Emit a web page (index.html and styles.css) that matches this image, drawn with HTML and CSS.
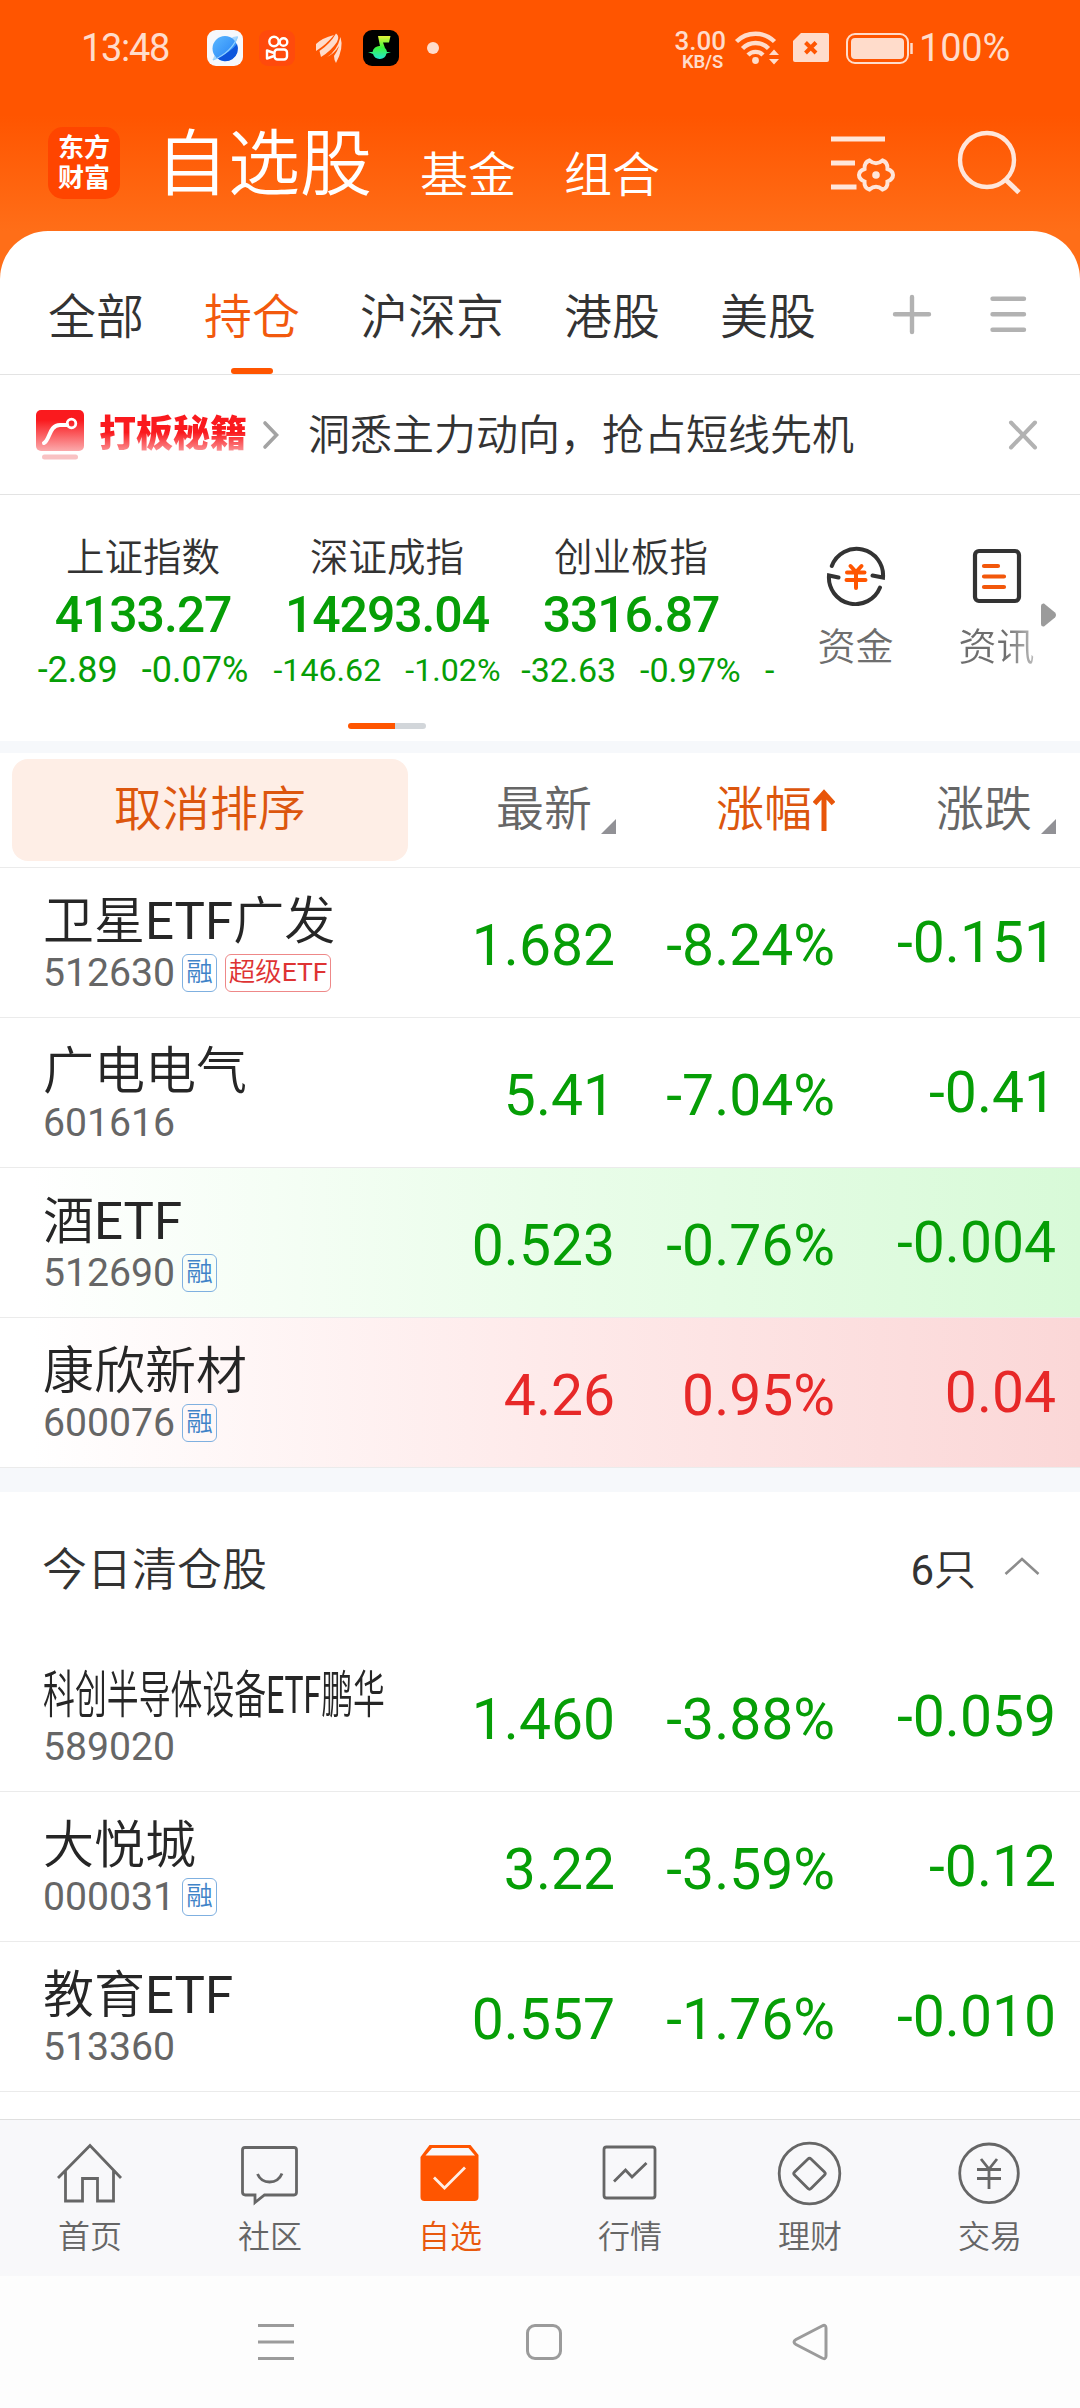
FILE: index.html
```html
<!DOCTYPE html>
<html lang="zh-CN">
<head>
<meta charset="utf-8">
<title>自选股</title>
<link rel="stylesheet" href="styles.css">
</head>
<body>
<div class="app">
  <header class="top">
    <div class="status">
      <span class="clock">13:48</span>
      <svg class="status-apps" width="240" height="40" viewBox="204 28 240 40">
        <defs>
          <linearGradient id="planet" x1="0" y1="0" x2="1" y2="1"><stop offset="0" stop-color="#5cb8ff"/><stop offset="1" stop-color="#1f7df5"/></linearGradient>
          <linearGradient id="note" x1="0" y1="0" x2="0" y2="1"><stop offset="0" stop-color="#e6f53a"/><stop offset=".5" stop-color="#3df53c"/><stop offset="1" stop-color="#22e6d0"/></linearGradient>
        </defs>
        <rect x="207" y="30" width="36" height="36" rx="9" fill="#f6f8fc"/>
        <path d="M212.500 60 L216 52 L233 37 L238 36 L236.500 41 L220 57 Z" fill="#a9d6fb"/>
        <circle cx="225" cy="48.500" r="12.500" fill="url(#planet)"/>
        <path d="M216.500 57.500 Q230 53 237 44 A12.500 12.500 0 0 1 216.500 57.500 Z" fill="#0d55dc"/>
        <path d="M213 60 Q231 53 237.500 37" fill="none" stroke="#8fd0ff" stroke-width="1.200"/>
        <rect x="259" y="30" width="36" height="36" rx="9" fill="#ff4a0c"/>
        <g fill="none" stroke="#fff" stroke-width="2.400" stroke-linejoin="round">
          <circle cx="274" cy="41.500" r="4.700"/><circle cx="283.500" cy="42" r="3.800"/>
          <rect x="274.500" y="49.500" width="12.500" height="10" rx="3"/><path d="M274 53 L267 50.500 V58.500 L274 56"/>
        </g>
        <g fill="#ffdccb"><path d="M316 51 V44 Q322 38 334 35 Q327 44 316 51Z"/><path d="M321 57 L319.500 51 Q330 44 336 33.500 Q340 36 337 42 Q331 51 321 57Z"/><path d="M327 57 Q337 51 340.500 37 Q344 48 336 63 Q334 60 334 56 Q338 50 339 46 Q334 54 327 57Z"/></g>
        <rect x="363" y="30" width="36" height="36" rx="9" fill="#000"/>
        <path d="M378 36 H390.500 L389 42.500 H383 L385 48 A7 7 0 0 1 387 52 H391 L386.500 53.500 A7 7 0 0 1 373 54 L368 52 H372.500 A7 7 0 0 1 380 46 Z" fill="url(#note)"/>
        <circle cx="433" cy="48" r="6" fill="#ffdccb"/>
      </svg>
      <span class="speed"><b>3.00</b><i>KB/S</i></span>
      <svg class="status-net" width="184" height="40" viewBox="734 28 184 40">
        <g fill="none" stroke="#ffdccb" stroke-width="4.400">
          <path d="M737.500 41.500 A27 27 0 0 1 775.500 41.500"/><path d="M743.500 48.500 A18 18 0 0 1 769.500 48.500"/><path d="M749 55 A10.500 10.500 0 0 1 764 55"/>
        </g>
        <circle cx="756.500" cy="60.500" r="3.400" fill="#ffdccb"/>
        <path d="M770 55 L775 49.500 L780 55Z M770 59 L775 64.500 L780 59Z" fill="#ffdccb"/>
        <path d="M802 33 H828 Q830 33 830 35 V60 Q830 62 828 62 H796 Q794 62 794 60 V41 Z" fill="#ffdccb"/>
        <path d="M806.500 42.500 L817 53 M817 42.500 L806.500 53" stroke="#ff5500" stroke-width="4"/>
        <rect x="848" y="34" width="61" height="29" rx="8" fill="none" stroke="#ffdccb" stroke-width="2"/>
        <rect x="852" y="38" width="53" height="21" rx="4" fill="#ffdccb"/>
        <path d="M912.500 43 V54" stroke="#ffdccb" stroke-width="2.500"/>
      </svg>
      <span class="battery">100%</span>
    </div>
    <div class="title-bar">
      <div class="logo"><span>东方</span><span>财富</span></div>
      <h1>自选股</h1>
      <span class="sub-title">基金</span>
      <span class="sub-title">组合</span>
      <svg class="title-tools" width="200" height="70" viewBox="826 128 200 70">
        <path d="M831 139 H885 M831 163 H855 M831 187 H856.500" stroke="#ffe6da" stroke-width="5"/>
        <path d="M869.500 160.500 Q876 166 882.500 160.500 Q888 162.500 887.500 169 Q893 171 893 175 Q893 179 887.500 181.500 Q888 188 882.500 189.500 Q876 184 869.500 189.500 Q864 188 864.500 181.500 Q859 179 859 175 Q859 171 864.500 169 Q864 162.500 869.500 160.500Z" fill="none" stroke="#ffe6da" stroke-width="4"/>
        <circle cx="876" cy="175" r="3.800" fill="#ffe6da"/>
        <circle cx="987" cy="160" r="27" fill="none" stroke="#ffe6da" stroke-width="4.400"/>
        <path d="M1005.500 179.500 L1019 192.500" stroke="#ffe6da" stroke-width="5"/>
      </svg>
    </div>
  </header>

  <main class="panel">
    <nav class="tabs">
      <span>全部</span><span class="on">持仓</span><span>沪深京</span><span>港股</span><span>美股</span>
      <svg class="tab-tools" width="140" height="44" viewBox="890 292 140 44">
        <path d="M895 314.300 H929 M912 297 V332 M992.500 298.700 H1024 M992.500 314.300 H1024 M992.500 329.700 H1024" stroke="#b2b2b2" stroke-width="4.400" stroke-linecap="round"/>
      </svg>
    </nav>

    <div class="promo">
      <svg width="48" height="50" viewBox="0 0 48 50">
        <defs><linearGradient id="red" x1="0" y1="0" x2="0" y2="1"><stop offset=".25" stop-color="#fa1a1e"/><stop offset="1" stop-color="#fbaaac"/></linearGradient></defs>
        <rect width="48" height="41" rx="5" fill="url(#red)"/>
        <path d="M8 33 C14 30 13 15 24 15 H31" fill="none" stroke="#fff" stroke-width="4" stroke-linecap="round"/>
        <circle cx="35.500" cy="13.500" r="4.300" fill="none" stroke="#fff" stroke-width="2.800"/>
        <rect x="6" y="44.500" width="36" height="5" rx="2.500" fill="#f9c2c3"/>
      </svg>
      <strong>打板秘籍</strong>
      <svg class="chev" width="18" height="30" viewBox="0 0 18 30"><path d="M3 3 L14.500 15 L3 27" fill="none" stroke="#a3a3a3" stroke-width="3.600" stroke-linecap="round"/></svg>
      <span class="slogan">洞悉主力动向，抢占短线先机</span>
      <svg class="close" width="32" height="32" viewBox="0 0 32 32"><path d="M4 3.500 L28 28.500 M28 3.500 L4 28.500" stroke="#b2b2b2" stroke-width="4" stroke-linecap="round"/></svg>
    </div>

    <section class="market">
      <div class="indices">
        <div class="index"><span class="iname">上证指数</span><b>4133.27</b><span class="chg c1"><i>-2.89</i><i>-0.07%</i></span></div>
        <div class="index"><span class="iname">深证成指</span><b>14293.04</b><span class="chg c2"><i>-146.62</i><i>-1.02%</i></span></div>
        <div class="index"><span class="iname">创业板指</span><b>3316.87</b><span class="chg c3"><i>-32.63</i><i>-0.97%</i></span></div>
        <div class="index peek"><span class="chg c3"><i>-</i></span></div>
      </div>
      <div class="quick">
        <div class="quick-item">
          <svg width="60" height="60" viewBox="826 546 60 60">
            <path d="M831.800 566 A26.500 26.500 0 0 1 883 577.500 L872.500 575.500" fill="none" stroke="#333" stroke-width="4" stroke-linecap="round"/>
            <path d="M880 587.500 A26.500 26.500 0 0 1 829 575.500 L838.500 577.500" fill="none" stroke="#333" stroke-width="4" stroke-linecap="round"/>
            <path d="M850.500 566 L856 572 L861.500 566 M847 572.500 H864.500 M846.500 580 H865.500 M856 573 V588" fill="none" stroke="#ff5500" stroke-width="4" stroke-linecap="round"/>
          </svg>
          <span>资金</span>
        </div>
        <div class="quick-item">
          <svg width="60" height="60" viewBox="967 546 60 60">
            <rect x="975" y="551" width="44" height="50" rx="4" fill="none" stroke="#333" stroke-width="4.200"/>
            <path d="M984 566 H998 M984 576.500 H1004 M984 587 H1004" stroke="#f2570a" stroke-width="4.200" stroke-linecap="round"/>
          </svg>
          <span class="fade">资讯</span>
        </div>
        <svg class="more" width="15" height="24" viewBox="0 0 15 24"><path d="M0 3 Q0 0 3 .5 L14 9.500 Q16 12 14 14.500 L3 23.500 Q0 24 0 21Z" fill="#9b9b9b"/></svg>
      </div>
    </section>
    <div class="pager"><i></i></div>

    <div class="cols head">
      <span class="cancel">取消排序</span>
      <span class="h1c">最新<svg width="15" height="15"><path d="M15 0 V15 H0Z" fill="#919196"/></svg></span>
      <span class="h2c">涨幅<svg width="22" height="42" viewBox="0 0 22 42"><path d="M11 42 V4 M1.500 14.500 L11 4 L20.500 14.500" fill="none" stroke="#e8560a" stroke-width="5"/></svg></span>
      <span class="h3c">涨跌<svg width="15" height="15"><path d="M15 0 V15 H0Z" fill="#919196"/></svg></span>
    </div>

    <div class="cols row"><div class="stock"><span class="name">卫星<b>ETF</b>广发</span><span class="code">512630<em>融</em><em class="super">超级<b>ETF</b></em></span></div><span class="n1">1.682</span><span class="n2">-8.24%</span><span class="n3">-0.151</span></div>
    <div class="cols row"><div class="stock"><span class="name">广电电气</span><span class="code">601616</span></div><span class="n1">5.41</span><span class="n2">-7.04%</span><span class="n3">-0.41</span></div>
    <div class="cols row flash-down"><div class="stock"><span class="name">酒<b>ETF</b></span><span class="code">512690<em>融</em></span></div><span class="n1">0.523</span><span class="n2">-0.76%</span><span class="n3">-0.004</span></div>
    <div class="cols row up flash-up"><div class="stock"><span class="name">康欣新材</span><span class="code">600076<em>融</em></span></div><span class="n1">4.26</span><span class="n2">0.95%</span><span class="n3">0.04</span></div>

    <div class="sold">
      <span>今日清仓股</span><span class="count"><b>6</b>只</span>
      <svg width="36" height="20" viewBox="0 0 36 20"><path d="M1.500 18 L18 3 L34.500 18" fill="none" stroke="#8c8c8c" stroke-width="2.600"/></svg>
    </div>

    <div class="cols row"><div class="stock"><span class="name tight">科创半导体设备<b>ETF</b>鹏华</span><span class="code">589020</span></div><span class="n1">1.460</span><span class="n2">-3.88%</span><span class="n3">-0.059</span></div>
    <div class="cols row"><div class="stock"><span class="name">大悦城</span><span class="code">000031<em>融</em></span></div><span class="n1">3.22</span><span class="n2">-3.59%</span><span class="n3">-0.12</span></div>
    <div class="cols row"><div class="stock"><span class="name">教育<b>ETF</b></span><span class="code">513360</span></div><span class="n1">0.557</span><span class="n2">-1.76%</span><span class="n3">-0.010</span></div>
  </main>

  <nav class="bottom">
    <div><svg viewBox="55 2140 70 66"><path d="M58 2178 L90 2145.500 L121 2178 M65.500 2171 V2201 H82.500 V2178.500 H97.500 V2201 H113.500 V2171" /></svg><span>首页</span></div>
    <div><svg viewBox="235 2140 70 66"><path d="M245 2147.500 H294 Q296.500 2147.500 296.500 2150 V2192 Q296.500 2195 294 2195 H264.500 L255 2202.500 V2195 H245.500 Q242.500 2195 242.500 2192 V2150 Q242.500 2147.500 245 2147.500Z M257.500 2174 Q261 2182 269.500 2182 Q278.500 2182 282 2173.500"/></svg><span>社区</span></div>
    <div class="on"><svg viewBox="415 2140 70 66"><path d="M420.500 2157 L429.500 2145 H470.500 L478.500 2155 V2197 Q478.500 2201 474.500 2201 H424.500 Q420.500 2201 420.500 2197Z" fill="#ff5500" stroke="none"/><path d="M432 2148 H468.500 L475 2155.500 H425.500Z" fill="#f8f8fa" stroke="none"/><path d="M434 2177.500 L444.500 2188 L465 2167.500" stroke="#ffeee5"/></svg><span>自选</span></div>
    <div><svg viewBox="595 2140 70 66"><rect x="604" y="2147" width="51" height="51" rx="2.500"/><path d="M614 2181.500 L625.500 2170 L632 2177 L646.500 2163"/></svg><span>行情</span></div>
    <div><svg viewBox="775 2140 70 66"><circle cx="809.500" cy="2173.500" r="30.300"/><path d="M808 2159 Q809.500 2157.500 811 2159 L824.500 2172 Q826 2173.500 824.500 2175 L811 2188.500 Q809.500 2190 808 2188.500 L794.500 2175 Q793 2173.500 794.500 2172Z"/></svg><span>理财</span></div>
    <div><svg viewBox="955 2140 70 66"><circle cx="989" cy="2173.300" r="29.300"/><path d="M981 2159 L989 2169 L997 2159 M977 2169.500 H1001 M977 2178.500 H1001 M989 2169 V2189"/></svg><span>交易</span></div>
  </nav>

  <footer class="sysnav">
    <svg width="36" height="38" viewBox="0 0 36 38"><path d="M0 2.500 H36 M0 19 H36 M0 35.500 H36"/></svg>
    <svg width="38" height="38" viewBox="0 0 38 38"><rect x="2.500" y="2.500" width="33" height="33" rx="7.500"/></svg>
    <svg width="36" height="38" viewBox="0 0 36 38"><path d="M30 3 Q34 1 34 5 V33 Q34 37 30 35 L4 21.500 Q0 19 4 16.500Z"/></svg>
  </footer>
</div>
</body>
</html>
```
FILE: styles.css
```css
* { box-sizing: border-box; margin: 0; padding: 0; }
body { width: 1080px; background: #fff; font-family: Roboto, "Noto Sans CJK SC", sans-serif; color: #333; }
i, em { font-style: normal; }
svg { display: block; flex: none; }
.app { height: 2408px; display: flex; flex-direction: column; overflow: hidden; background: linear-gradient(#ff5500 115px, #ff6e18 231px, #ff6e18 300px, #fff 300px); }

.top { height: 231px; flex: none; }
.status { height: 98px; display: flex; align-items: flex-start; padding: 28px 0 0 81px; color: #ffdccb; white-space: nowrap; }
.clock { width: 123px; font-size: 38px; line-height: 41px; letter-spacing: -1.3px; }
.speed { width: 57px; margin-left: 229px; display: flex; flex-direction: column; align-items: flex-end; padding-right: 4px; }
.speed b { font-size: 26px; font-weight: 500; line-height: 26px; }
.speed i { font-size: 18.500px; font-weight: 600; line-height: 16px; padding: 0 3px 0 0; letter-spacing: -.2px; }
.status-net { margin-left: 3px; }
.battery { margin-left: 2px; font-size: 38px; line-height: 41px; letter-spacing: -.2px; }

.title-bar { height: 133px; display: flex; align-items: flex-start; padding: 29px 0 0 48px; color: #fff; }
.logo { width: 72px; height: 72px; border-radius: 15px; background: #ff4500; display: flex; flex-direction: column; align-items: center; padding-top: 6px; }
.logo span { font-size: 26px; line-height: 30px; font-weight: 700; }
h1 { font-size: 72px; line-height: 76px; font-weight: 350; margin-left: 36px; width: 264px; }
.sub-title { font-size: 48px; line-height: 72px; padding-top: 13px; width: 144px; font-weight: 350; white-space: nowrap; }
.title-tools { margin: 1px 0 0 118px; }

.panel { height: 1888px; flex: none; background: #fff; border-radius: 48px 48px 0 0; }
.tabs { height: 144px; border-bottom: 1px solid #e3e3e3; display: flex; gap: 60px; padding-left: 48px; font-size: 48px; line-height: 173px; font-weight: 350; }
.tabs span { height: 143px; position: relative; white-space: nowrap; }
.tabs .on { color: #f2590d; }
.tabs .on::after { content: ""; position: absolute; left: 27px; bottom: 0; width: 42px; height: 6px; border-radius: 3px; background: #ff5500; }
.tab-tools { margin: 61px 0 0 14px; }

.promo { height: 120px; border-bottom: 1px solid #e3e3e3; display: flex; align-items: center; padding-left: 36px; }
.promo strong { font-size: 37px; font-weight: 900; width: 163px; padding-left: 15px; line-height: 50px; white-space: nowrap; background: linear-gradient(#fa1a1e 45%, #fbaaac 90%); -webkit-background-clip: text; background-clip: text; color: transparent; }
.promo .chev { margin-left: 15px; }
.slogan { margin-left: 28px; width: 699px; padding-top: 2px; font-size: 42px; line-height: 60px; font-weight: 350; white-space: nowrap; }

.market { height: 228px; display: flex; }
.indices { width: 776px; padding-left: 21px; display: flex; overflow: hidden; color: #069e06; }
.index { width: 244px; flex: none; display: flex; flex-direction: column; align-items: center; padding-top: 37px; white-space: nowrap; }
.iname { font-size: 38.500px; line-height: 52px; color: #333; font-weight: 350; }
.index b { font-size: 50px; line-height: 62px; font-weight: 500; letter-spacing: -1.1px; }
.chg { display: flex; gap: 24px; height: 42px; line-height: 48px; align-items: baseline; }
.c1 { font-size: 36px; } .c2 { font-size: 32.200px; } .c3 { font-size: 34px; }
.peek { width: 22px; padding: 151px 0 0 12px; align-items: flex-start; }
.quick { display: flex; padding: 51px 0 0 9px; position: relative; }
.quick-item { width: 141px; display: flex; flex-direction: column; align-items: center; }
.quick-item span { font-size: 38px; line-height: 50px; margin-top: 16px; color: #6e6e6e; font-weight: 350; }
.quick-item .fade { background: linear-gradient(90deg, #6e6e6e 60%, #bbb); -webkit-background-clip: text; background-clip: text; color: transparent; }
.more { margin: 57px 0 0 -26px; }
.pager { height: 30px; border-bottom: 12px solid #f6f8fb; padding-left: 348px; }
.pager i { display: block; width: 78px; height: 6px; border-radius: 3px; background: linear-gradient(90deg, #ff5500 47px, #d2d6da 47px); }

.cols { display: flex; align-items: center; }
.head { height: 115px; border-bottom: 1px solid #ebebeb; padding-left: 12px; font-size: 48px; line-height: 60px; font-weight: 350; color: #666; white-space: nowrap; }
.head span { display: flex; }
.cancel { width: 396px; height: 102px; border-radius: 16px; background: #feeee6; color: #dc560d; justify-content: center; align-items: center; padding-bottom: 1px; }
.h1c, .h3c { align-items: flex-end; }
.h1c { margin-left: 88px; }
.h1c svg, .h3c svg { margin: 0 0 6px 9px; }
.h2c { margin-left: 100px; color: #dc560d; align-items: center; }
.h2c svg { margin-left: 1px; }
.h3c { margin-left: 101px; }

.row { height: 150px; border-bottom: 1px solid #ebebeb; padding-left: 43px; color: #069e06; font-size: 57px; white-space: nowrap; }
.row.up { color: #e72828; }
.flash-down { background: linear-gradient(90deg, #fff 3%, #eafdea 50%, #d8fad8); }
.flash-up { background: linear-gradient(90deg, #fff 3%, #feeaea 50%, #fbd7d7); }
.stock { width: 340px; height: 149px; padding-top: 24px; display: flex; flex-direction: column; }
.name { font-size: 51px; line-height: 60px; color: #262626; font-weight: 350; }
.name b, .code b, .count b { font-weight: 400; }
.tight { transform: scaleX(.625); transform-origin: 0 50%; }
.code { display: flex; align-items: center; font-size: 39.200px; line-height: 42px; color: #666; }
.code em { height: 38px; margin-left: 8px; padding: 0 3px; border: 1px solid #7fb0e0; border-radius: 6px; font-size: 26.500px; line-height: 34px; font-weight: 350; color: #3f83c8; }
.code em:first-of-type { margin-left: 7px; }
.code .super { color: #de3333; border-color: #e88; }
.n1 { width: 232px; text-align: right; padding-top: 5px; }
.n2 { width: 220px; text-align: right; padding-top: 5px; }
.n3 { width: 221px; text-align: right; margin-top: -1px; }

.sold { height: 174px; border-top: 24px solid #f6f8fb; display: flex; align-items: center; padding: 0 40px 2px 42px; font-size: 45px; font-weight: 350; }
.count { margin-left: auto; margin-right: 28px; font-size: 42px; }

.bottom { height: 157px; flex: none; border-top: 1px solid #dfdfdf; background: #f8f8fa; display: flex; }
.bottom div { width: 180px; display: flex; flex-direction: column; align-items: center; padding-top: 20px; }
.bottom svg { width: 70px; height: 66px; fill: none; stroke: #666; stroke-width: 2.800; }
.bottom span { font-size: 32px; line-height: 40px; margin-top: 11px; color: #666; font-weight: 350; }
.bottom .on span { color: #e8590d; }
.sysnav { flex: 1; background: #fdfdfd; display: flex; padding: 47px 0 0 258px; }
.sysnav svg { fill: none; stroke: #9b9b9b; stroke-width: 3; }
.sysnav svg + svg { margin-left: 231px; }
.sysnav svg + svg + svg { margin-left: 229px; }
```
